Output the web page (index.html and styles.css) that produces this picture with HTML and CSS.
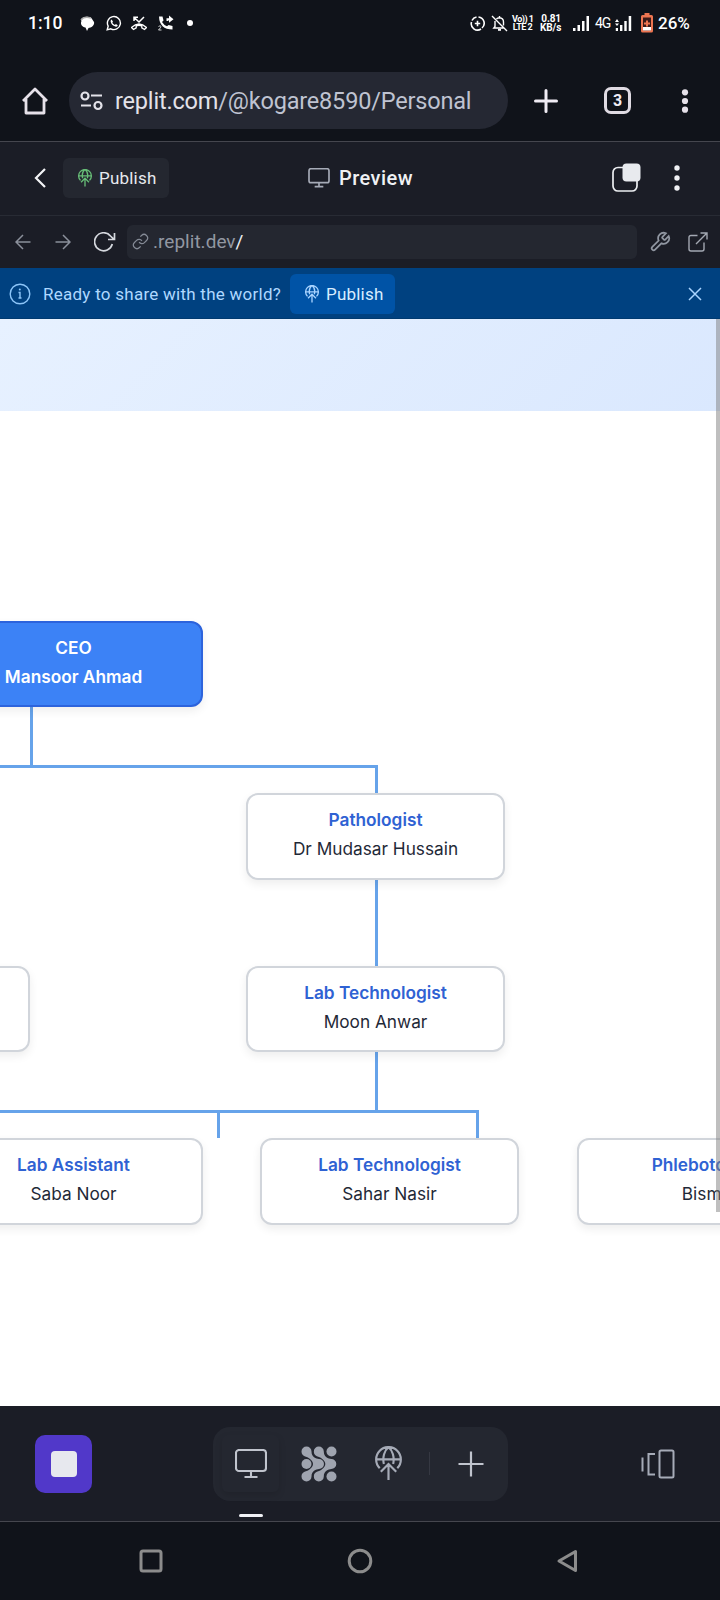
FILE: index.html
```html
<!DOCTYPE html>
<html lang="en">
<head>
<meta charset="utf-8">
<title>Preview</title>
<link rel="stylesheet" href="styles.css">
</head>
<body>
<svg class="defs" width="0" height="0" aria-hidden="true">
  <symbol id="globe" viewBox="0 0 26 34">
    <path d="M4.500 21.500A12 12 0 1 1 21.500 21.500M1 13H25M8.500 17.500C7 11 9 4 13 1C17 4 19 11 17.500 17.500M13 33V17.500M5.500 25L13 17.500L20.500 25"/>
  </symbol>
  <symbol id="monitor" viewBox="0 0 32 30">
    <rect x="1" y="1" width="30" height="21" rx="3"/><path d="M16 22V28M9.500 28H22.500"/>
  </symbol>
  <symbol id="flow" viewBox="0 0 24 36">
    <path d="M.5 5.500A5 5 0 0 1 10.500 5.500C10.500 11 15 12.800 18 13A5 5 0 0 1 18 23C15 23.200 10.500 25 10.500 30.500A5 5 0 0 1 .5 30.500C.5 25 6 26 9 23C13 20 13 16 9 13C6 10 .5 11 .5 5.500Z"/>
  </symbol>
</svg>

<div class="status">
  <span class="clock">1:10</span>
  <svg class="s-chat" width="15" height="15" viewBox="0 0 15 15"><path d="M1 4C2 0 11 0 12 3L14 6C15 9 11 12 8.500 12L7 15L5.500 11.500C2 11 0 8 1.500 5Z" fill="#fff"/><path d="M1 4Q4 0 11 2" fill="none" stroke="#aaa" stroke-width="1.500"/></svg>
  <svg class="s-wa" width="16" height="16" viewBox="0 0 16 16"><path d="M1.200 14.800L2.200 11.200A6.500 6.500 0 1 1 4.800 13.800Z" fill="none" stroke="#fff" stroke-width="1.400"/><path d="M5.700 4.500L7 6.700L6.300 7.700Q7.200 9.300 8.900 10L9.900 9.100L11.800 10.200Q11 12.100 9.300 11.600Q5.400 10.500 4.600 6.600Q4.500 5 5.700 4.500Z" fill="#fff"/></svg>
  <svg class="s-missed" width="16" height="15" viewBox="0 0 16 15"><path d="M3 5V1.200H7M3.200 1.500L8 6L13 1" fill="none" stroke="#fff" stroke-width="1.500"/><path d="M.5 11.500Q8 4.500 15.500 11.500L13.500 13.500L10.800 11.800V9.800Q8 9 5.200 9.800V11.800L2.500 13.500Z" fill="none" stroke="#fff" stroke-width="1.300"/></svg>
  <svg class="s-fwd" width="16" height="16" viewBox="0 0 16 16"><path d="M1 1.500H4.500L5.500 5.500L4 7Q5.800 10 9 11.300L10.600 10L14.500 11V14.500Q1.500 14.500 1 1.500Z" fill="#fff"/><path d="M8.500 6V3.300H11V.5L15.500 4.300L11 7.800V5.500H10V6Z" fill="#fff"/><path d="M.5 11.500Q2.500 10 3 11.500Q3 12.500 .5 15H3.500" fill="none" stroke="#fff" stroke-width=".8"/></svg>
  <i class="s-dot"></i>
  <svg class="push" width="15" height="15" viewBox="0 0 15 15"><g fill="none" stroke="#fff" stroke-width="1.600"><path d="M8.500 1A6.300 6.300 0 0 1 12 12M11 13A6.300 6.300 0 0 1 1.500 6M2 4.500A6.300 6.300 0 0 1 6.500 1"/><path d="M4.800 7.500H10.200M7.500 4.800V10.200"/></g></svg>
  <svg class="s-bell" width="17" height="17" viewBox="0 0 17 17"><g fill="none" stroke="#fff" stroke-width="1.400"><path d="M1 1L16 16M4 6V11.500L2.800 13H12.500M5.500 4Q6.500 2.700 8.500 2.700Q12.500 3 12.500 7V10.500M8.500 2.700V1"/><path d="M7 14.800H10" stroke-width="2"/></g></svg>
  <span class="tiny s-volte">Vo)) 1<br>LTE 2</span>
  <span class="tiny s-rate">0.81<br>KB/s</span>
  <svg class="s-sig" width="17" height="15" viewBox="0 0 17 15"><path d="M0 12H2.500V15H0ZM4.500 9H7V15H4.500ZM9 5H11.500V15H9ZM13.500 0H16V15H13.500Z" fill="#fff"/></svg>
  <span class="s-4g">4G</span>
  <svg class="s-sig2" width="17" height="15" viewBox="0 0 17 15"><path d="M.8 12H3V15H.8ZM5 9H7.400V15H5ZM9.300 5H11.700V15H9.300ZM13.700 0H16.200V15H13.700ZM0 6L2 3L4 6ZM0 7.500H4L2 10Z" fill="#fff"/></svg>
  <svg class="s-bat" width="12" height="20" viewBox="0 0 12 20"><path d="M3.500 0H8.500V2H10.500Q12 2 12 3.500V18Q12 19.500 10.500 19.500H1.500Q0 19.500 0 18V3.500Q0 2 1.500 2H3.500Z" fill="#ed7551"/><path d="M2 4.500H10V17.500H2Z" fill="#3a1a18"/><path d="M2 14H10V17.500H2Z" fill="#fff"/><path d="M3 10.500H9M6 7.500V13.500" stroke="#ed7551" stroke-width="2"/></svg>
  <span class="s-pct">26%</span>
</div>

<div class="browser">
  <svg class="home" width="28" height="28" viewBox="0 0 28 28"><path d="M2 14L14 2L26 14M5 12V26H23V12" fill="none" stroke="#e6e1e9" stroke-width="2.800" stroke-linejoin="round"/></svg>
  <div class="omnibox">
    <svg width="24" height="20" viewBox="0 0 24 20"><g fill="none" stroke="#e3e2e9" stroke-width="2.200"><circle cx="5" cy="5" r="3.500"/><circle cx="18" cy="14.500" r="3.500"/><path d="M11 4.500H22M1 14.500H11"/></g></svg>
    <span class="url"><b>replit.com</b>/@kogare8590/Personal</span>
  </div>
  <svg class="newtab" width="24" height="24" viewBox="0 0 24 24"><path d="M12 1.500V22.500M1.500 12H22.500" stroke="#f0ecf4" stroke-width="3" stroke-linecap="round"/></svg>
  <span class="tabs">3</span>
  <svg class="menu" width="8" height="26" viewBox="0 0 8 26"><g fill="#e6e1e9"><circle cx="4" cy="4.300" r="3.100"/><circle cx="4" cy="13" r="3.100"/><circle cx="4" cy="21.700" r="3.100"/></g></svg>
</div>

<div class="head">
  <svg class="back" width="12" height="20" viewBox="0 0 12 20"><path d="M11 1L2 10L11 19" fill="none" stroke="#f3f4f6" stroke-width="2.200"/></svg>
  <span class="chip"><svg class="line green" width="14" height="18"><use href="#globe"/></svg><span>Publish</span></span>
  <svg class="line mon" width="22" height="20"><use href="#monitor"/></svg>
  <span class="title">Preview</span>
  <svg class="layers" width="29" height="29" viewBox="0 0 29 29"><rect x="1" y="4.500" width="24" height="23.500" rx="5" fill="none" stroke="#eceef1" stroke-width="1.700"/><rect x="10.500" y=".5" width="18" height="18" rx="4" fill="#e8eaee"/></svg>
  <svg class="dots" width="6" height="26" viewBox="0 0 6 26"><g fill="#f0f1f4"><circle cx="3" cy="3" r="2.700"/><circle cx="3" cy="13" r="2.700"/><circle cx="3" cy="23" r="2.700"/></g></svg>
</div>

<div class="tool">
  <svg width="16" height="16" viewBox="0 0 16 16"><path d="M15.500 8H1M8 1L1 8L8 15" class="st dim"/></svg>
  <svg class="fw" width="16" height="16" viewBox="0 0 16 16"><path d="M.5 8H15M8 1L15 8L8 15" class="st dim"/></svg>
  <svg class="reload" width="22" height="20" viewBox="0 0 22 20"><path d="M18.300 12A9 9 0 1 1 16.500 4L20 7.300M20.500 1V7.500H14" class="st bright"/></svg>
  <div class="address">
    <svg width="17" height="17" viewBox="0 0 24 24"><path d="M10 13a5 5 0 0 0 7.540.54l3-3a5 5 0 0 0-7.070-7.070l-1.720 1.710M14 11a5 5 0 0 0-7.540-.54l-3 3a5 5 0 0 0 7.070 7.070l1.710-1.710" fill="none" stroke="#858b96" stroke-width="1.700"/></svg>
    <span>.replit.dev<b>/</b></span>
  </div>
  <svg class="wrench" width="22" height="22" viewBox="0 0 24 24"><path d="M14.700 6.300a1 1 0 0 0 0 1.400l1.600 1.600a1 1 0 0 0 1.400 0l3.770-3.770a6 6 0 0 1-7.940 7.940l-6.910 6.910a2.120 2.120 0 0 1-3-3l6.910-6.910a6 6 0 0 1 7.940-7.940z" fill="none" stroke="#9096a1" stroke-width="1.900"/></svg>
  <svg class="ext" width="20" height="20" viewBox="0 0 20 20"><path d="M9.500 3.500H3Q1 3.500 1 5.500V17Q1 19 3 19H14Q16 19 16 17V10.500M12.500 1H19V7.500M19 1L8 12" fill="none" stroke="#a3a8b2" stroke-width="1.400"/></svg>
</div>

<div class="banner">
  <svg width="22" height="22" viewBox="0 0 22 22"><g fill="none" stroke="#8cc5f8" stroke-width="1.400"><circle cx="11" cy="11" r="9.800"/><path d="M9.500 9.500H11V15M9.500 15H12.500"/></g><circle cx="10.800" cy="6.500" r="1" fill="#8cc5f8"/></svg>
  <span class="ready">Ready to share with the world?</span>
  <span class="chip blue"><svg class="line" width="14" height="18"><use href="#globe"/></svg><span>Publish</span></span>
  <svg class="close" width="14" height="14" viewBox="0 0 14 14"><path d="M1 1L13 13M13 1L1 13" stroke="#a9d4ff" stroke-width="1.500"/></svg>
</div>

<div class="chart">
  <div class="hero"></div>
  <svg class="wires" width="720" height="1087" viewBox="0 0 720 1087"><path d="M31.500 388V446M0 447.500H376.500V474M376.500 561V647M376.500 733V791M0 792.500H477.500V819M218.500 792V819"/></svg>
  <div class="node ceo"><b>CEO</b><span>Mansoor Ahmad</span></div>
  <div class="node path"><b>Pathologist</b><span>Dr Mudasar Hussain</span></div>
  <div class="node side"></div>
  <div class="node moon"><b>Lab Technologist</b><span>Moon Anwar</span></div>
  <div class="node saba"><b>Lab Assistant</b><span>Saba Noor</span></div>
  <div class="node sahar"><b>Lab Technologist</b><span>Sahar Nasir</span></div>
  <div class="node bisma"><b>Phlebotomist</b><span>Bisma</span></div>
  <i class="scroll"></i>
</div>

<div class="dock">
  <div class="stop"><i></i></div>
  <div class="group">
    <div class="sel"><svg class="line" width="32" height="30"><use href="#monitor"/></svg></div>
    <svg class="agent" width="36" height="36" viewBox="0 0 36 36"><use href="#flow" width="24" height="36"/><use href="#flow" x="12.300" width="24" height="36"/><circle cx="5.500" cy="18" r="5"/><circle cx="30.500" cy="5.500" r="5"/><circle cx="30.500" cy="30.500" r="5"/></svg>
    <svg class="line pub" width="27" height="35"><use href="#globe"/></svg>
    <i class="sep"></i>
    <svg class="add" width="26" height="26" viewBox="0 0 26 26"><path d="M13 .5V25.500M.5 13H25.500" stroke="#c0c4cd" stroke-width="2.200"/></svg>
  </div>
  <svg class="devices" width="34" height="30" viewBox="0 0 34 30"><g fill="none" stroke="#a6abb7" stroke-width="2"><path d="M1.500 8.500V22.500M14 5H7.500V25.500H14"/><rect x="18.500" y="1.500" width="14" height="27" rx="1.500"/></g></svg>
  <i class="mark"></i>
</div>

<div class="nav">
  <svg width="24" height="24" viewBox="0 0 24 24"><rect x="2" y="2" width="20" height="20" rx="2"/></svg>
  <svg width="26" height="26" viewBox="0 0 26 26"><circle cx="13" cy="13" r="10.800"/></svg>
  <svg width="24" height="24" viewBox="0 0 24 24"><path d="M3 12L19.500 2.500V21.500Z"/></svg>
</div>
</body>
</html>
```
FILE: styles.css
```css
* { box-sizing: border-box; }
html, body { margin: 0; width: 720px; height: 1600px; overflow: hidden; background: #10131a; }
body { font-family: Roboto, sans-serif; display: flex; flex-direction: column; }
svg { display: block; flex: none; }
span { white-space: nowrap; }
.defs { position: absolute; }
.line { fill: none; stroke: #a6abb7; stroke-width: 2.100; }

.status { height: 64px; padding: 0 30px 18px 28px; display: flex; align-items: center; color: #fff; flex: none; }
.clock { font-size: 17.500px; font-weight: 500; width: 52px; }
.s-wa { margin-left: 11px; }
.s-missed { margin-left: 9px; }
.s-fwd { margin-left: 11px; }
.s-dot { width: 6px; height: 6px; border-radius: 50%; background: #fff; margin-left: 13px; }
.push { margin-left: auto; }
.s-bell { margin-left: 6px; }
.tiny { font-weight: 700; text-align: center; }
.s-volte { margin-left: 4px; width: 21px; font-size: 9px; line-height: 8.500px; letter-spacing: -.500px; }
.s-rate { margin-left: 7px; width: 21px; font-size: 10px; line-height: 9px; text-align: right; letter-spacing: -.1px; }
.s-sig { margin-left: 12px; }
.s-4g { margin-left: 5px; width: 16px; font-size: 14px; letter-spacing: -1px; }
.s-sig2 { margin-left: 4px; }
.s-bat { margin-left: 9px; margin-top: -1px; }
.s-pct { margin-left: 5px; width: 32px; font-size: 17px; font-weight: 500; }

.browser { height: 78px; flex: none; border-bottom: 1px solid #45464e; display: flex; align-items: center; padding: 0 30px 4px 21px; }
.omnibox { width: 439px; height: 57px; margin-left: 20px; border-radius: 29px; background: #252833; display: flex; align-items: center; padding-left: 11px; }
.url { margin-left: 11px; font-size: 23.500px; letter-spacing: -.180px; color: #bfc3d1; }
.url b { font-weight: 400; color: #e3e2e9; }
.newtab { margin-left: 26px; }
.tabs { width: 27px; height: 27px; margin-left: 46px; border: 3px solid #e0dbe3; border-radius: 7px; color: #f0ecf4; font-size: 16px; line-height: 21px; font-weight: 700; text-align: center; }
.menu { margin-left: 50px; }

.head { height: 74px; flex: none; background: #1b1d26; border-bottom: 1px solid #282b34; display: flex; align-items: center; padding: 0 0 2px 34px; }
.chip { height: 40px; width: 106px; margin-left: 17px; border-radius: 6px; background: #242730; color: #e7e9ee; display: flex; align-items: center; padding-left: 15px; gap: 7px; font-size: 17px; letter-spacing: .200px; }
.green { stroke: #67bd77; }
.mon { margin-left: 139px; }
.title { margin-left: 9px; width: 76px; font-size: 20px; font-weight: 500; color: #f0f1f4; letter-spacing: .450px; }
.layers { margin-left: 197px; }
.dots { margin-left: 33px; }
.chip .line, .mon { stroke-width: 2.500; }

.tool { height: 52px; flex: none; background: #1b1d26; display: flex; align-items: center; padding: 0 0 1px 15px; }
.st { fill: none; stroke-width: 1.500; }
.dim { stroke: #8b909b; }
.bright { stroke: #d5d8de; stroke-width: 1.700; }
.fw { margin-left: 24px; }
.reload { margin-left: 23px; }
.address { width: 510px; height: 34px; margin-left: 11px; border-radius: 6px; background: #242730; display: flex; align-items: center; padding-left: 5px; gap: 4px; font-size: 19px; color: #9297a2; letter-spacing: .020px; }
.address b { font-weight: 400; color: #eceef2; }
.wrench { margin-left: 12px; }
.ext { margin-left: 17px; }

.banner { height: 51px; flex: none; background: #004180; border-bottom: 1px solid #003a70; display: flex; align-items: center; padding: 1px 0 0 9px; }
.ready { margin-left: 12px; width: 247px; font-size: 17px; color: #afd8ff; letter-spacing: .260px; }
.blue { margin-left: 0; width: 105px; background: #0053a6; color: #d8edff; }
.blue .line { stroke: #a9d4ff; }
.close { margin-left: 293px; }

.chart { position: relative; height: 1087px; flex: none; background: #fff; overflow: hidden; }
.hero { height: 92px; background: linear-gradient(135deg, #e7f1ff, #dae8fe); }
.wires { position: absolute; left: 0; top: 0; fill: none; stroke: #66a3ea; stroke-width: 3; }
.node { position: absolute; width: 259px; height: 87px; border: 2px solid #d1d5db; border-radius: 12px; background: #fff; box-shadow: 0 4px 10px rgba(0,0,0,.07); text-align: center; font: 17.250px/28.500px Inter, sans-serif; color: #1f2937; padding-top: 11px; }
.node b, .node span { display: block; }
.node b { font-weight: 600; color: #2f62d3; }
.ceo { left: -56px; top: 302px; height: 86px; background: #3c82f6; border-color: #2c63dc; color: #fff; font-weight: 600; }
.ceo b { color: #fff; }
.path { left: 246px; top: 474px; }
.side { left: -229px; top: 647px; height: 86px; }
.moon { left: 246px; top: 647px; height: 86px; }
.saba { left: -56px; top: 819px; }
.sahar { left: 260px; top: 819px; }
.bisma { left: 577px; top: 819px; }
.scroll { position: absolute; right: 0; top: 0; width: 4px; height: 893px; background: rgba(128,128,128,.5); }

.dock { position: relative; height: 116px; flex: none; background: #1b1d26; border-bottom: 1px solid #45464e; display: flex; align-items: center; padding-left: 35px; }
.stop { width: 57px; height: 58px; border-radius: 10px; background: #5138c9; display: flex; align-items: center; justify-content: center; }
.stop i { width: 26px; height: 26px; border-radius: 4px; background: #e7e8ee; }
.group { width: 295px; height: 74px; margin-left: 121px; border-radius: 17px; background: #242730; display: flex; align-items: center; padding-left: 9px; }
.sel { width: 57px; height: 57px; border-radius: 6px; box-shadow: 0 3px 7px rgba(0,0,0,.13); display: flex; align-items: center; justify-content: center; }
.sel .line { stroke: #c0c4cd; }
.agent { margin-left: 22px; fill: #9fa4af; }
.pub { margin-left: 38px; }
.sep { width: 1px; height: 23px; margin-left: 27px; background: #353842; }
.add { margin-left: 28px; }
.devices { margin-left: 133px; }
.mark { position: absolute; left: 239px; bottom: 4px; width: 24px; height: 3px; border-radius: 2px; background: #f0f1f5; }
.nav { height: 78px; flex: none; display: flex; align-items: center; justify-content: space-between; padding: 0 140px 0 139px; }
.nav svg { fill: none; stroke: #8c8c8c; stroke-width: 3; stroke-linejoin: round; }
```
